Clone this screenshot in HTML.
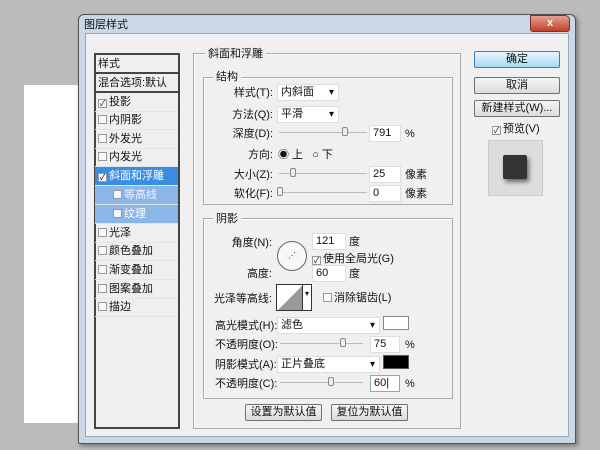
<!DOCTYPE html><html><head><meta charset="utf-8"><style>
*{margin:0;padding:0;box-sizing:border-box}
body{width:600px;height:450px;background:#bbb;position:relative;overflow:hidden;font-family:"Liberation Sans","Noto Sans CJK SC",sans-serif;font-size:11px;line-height:14px;color:#111}
.a{position:absolute}
.win{left:78px;top:14px;width:498px;height:430px;background:#c9d7e6;border:1px solid #555;border-radius:6px 6px 2px 2px;box-shadow:2px 2px 4px #777}
.inner{left:85px;top:33px;width:484px;height:404px;background:#f0f0f0;border:1px solid #9aa8b8}
.fs{border:1px solid #aaa;box-shadow:inset 1px 1px 0 #fff}
.lbl{background:#f0f0f0;padding:0 3px}
.row{left:95px;width:83px;height:19px;border-bottom:1px solid #e4e4e4;padding-left:3px;line-height:18px}
.cb{display:inline-block;width:9px;height:9px;border:1px solid #999;background:#f8f8f8;vertical-align:-1px;margin-right:2px;font-size:8px;line-height:7px;text-align:center}
.btn{border:1px solid #707070;border-radius:2px;background:linear-gradient(#f6f6f6,#dcdcdc);text-align:center;line-height:15px}
.inp{background:#fff;border:1px solid #ddd;padding-left:3px;line-height:15px}
.sel{background:#fff;border:1px solid #ddd;padding-left:3px;line-height:15px}
.sel:after{content:"▾";position:absolute;right:4px;font-size:10px}
.sl{height:1px;background:#bbb}
.th{width:6px;height:9px;border:1px solid #888;border-radius:2px;background:#eee}
.r{text-align:right}
</style></head><body>
<div class="a" style="left:24px;top:85px;width:57px;height:338px;background:#fff"></div>
<div class="a win"></div>
<div class="a" style="left:84px;top:18px;font-size:11px">图层样式</div>
<div class="a" style="left:530px;top:15px;width:40px;height:17px;background:linear-gradient(#e8a090,#c0402c);border:1px solid #733;border-radius:0 5px 3px 3px;color:#fff;text-align:center;font-weight:bold;line-height:15px">x</div>
<div class="a inner"></div>
<div class="a" style="left:94px;top:53px;width:86px;height:376px;border:2px solid #444;background:#efefef"></div>
<div class="a row" style="top:55px;border-bottom:2px solid #444">样式</div>
<div class="a row" style="top:74px;border-bottom:2px solid #444">混合选项:默认</div>
<div class="a row" style="top:93px"><span class="cb">✓</span>投影</div>
<div class="a row" style="top:111px"><span class="cb"></span>内阴影</div>
<div class="a row" style="top:130px"><span class="cb"></span>外发光</div>
<div class="a row" style="top:148px"><span class="cb"></span>内发光</div>
<div class="a row" style="top:167px;background:#3b8de0;color:#fff"><span class="cb" style="color:#000">✓</span>斜面和浮雕</div>
<div class="a row" style="top:186px;background:#8ab6e8;color:#eef;padding-left:18px"><span class="cb"></span>等高线</div>
<div class="a row" style="top:205px;background:#8ab6e8;color:#fff;padding-left:18px"><span class="cb"></span>纹理</div>
<div class="a row" style="top:224px"><span class="cb"></span>光泽</div>
<div class="a row" style="top:242px"><span class="cb"></span>颜色叠加</div>
<div class="a row" style="top:261px"><span class="cb"></span>渐变叠加</div>
<div class="a row" style="top:280px"><span class="cb"></span>图案叠加</div>
<div class="a row" style="top:298px"><span class="cb"></span>描边</div>
<div class="a fs" style="left:193px;top:53px;width:268px;height:376px"></div>
<div class="a lbl" style="left:205px;top:47px">斜面和浮雕</div>
<div class="a fs" style="left:203px;top:77px;width:250px;height:128px"></div>
<div class="a lbl" style="left:213px;top:70px">结构</div>
<div class="a r" style="left:220px;top:86px;width:53px">样式(T):</div>
<div class="a sel" style="left:277px;top:84px;width:62px">内斜面</div>
<div class="a r" style="left:220px;top:108px;width:53px">方法(Q):</div>
<div class="a sel" style="left:277px;top:106px;width:62px">平滑</div>
<div class="a r" style="left:220px;top:127px;width:53px">深度(D):</div>
<div class="a sl" style="left:279px;top:132px;width:88px"></div>
<div class="a th" style="left:342px;top:127px"></div>
<div class="a inp" style="left:369px;top:125px;width:32px">791</div><div class="a" style="left:405px;top:127px">%</div>
<div class="a r" style="left:220px;top:148px;width:53px">方向:</div>
<div class="a" style="left:278px;top:148px">◉ 上 &nbsp; ○ 下</div>
<div class="a r" style="left:220px;top:168px;width:53px">大小(Z):</div>
<div class="a sl" style="left:279px;top:173px;width:88px"></div><div class="a th" style="left:290px;top:168px"></div>
<div class="a inp" style="left:369px;top:166px;width:32px">25</div><div class="a" style="left:405px;top:168px">像素</div>
<div class="a r" style="left:220px;top:187px;width:53px">软化(F):</div>
<div class="a sl" style="left:279px;top:192px;width:88px"></div><div class="a th" style="left:277px;top:187px"></div>
<div class="a inp" style="left:369px;top:185px;width:32px">0</div><div class="a" style="left:405px;top:187px">像素</div>
<div class="a fs" style="left:203px;top:218px;width:250px;height:181px"></div>
<div class="a lbl" style="left:213px;top:212px">阴影</div>
<div class="a r" style="left:200px;top:236px;width:72px">角度(N):</div>
<div class="a" style="left:277px;top:241px;width:30px;height:30px;border:1px solid #666;border-radius:50%;background:#f8f8f8;font-size:8px;text-align:center;line-height:28px">⋰</div>
<div class="a inp" style="left:312px;top:233px;width:34px">121</div><div class="a" style="left:349px;top:235px">度</div>
<div class="a" style="left:312px;top:252px"><span class="cb">✓</span>使用全局光(G)</div>
<div class="a r" style="left:200px;top:267px;width:72px">高度:</div>
<div class="a inp" style="left:312px;top:265px;width:34px">60</div><div class="a" style="left:349px;top:267px">度</div>
<div class="a r" style="left:190px;top:292px;width:82px">光泽等高线:</div>
<div class="a" style="left:276px;top:284px;width:36px;height:27px;border:1px solid #333;background:#fff"><svg width="25" height="25" style="position:absolute;left:1px;top:0"><polygon points="0,25 25,0 25,25" fill="#999"/></svg><div class="a" style="left:25px;top:0;width:9px;height:25px;border-left:1px solid #333;font-size:8px;line-height:18px;text-align:center">▾</div></div>
<div class="a" style="left:323px;top:291px"><span class="cb"></span>消除锯齿(L)</div>
<div class="a" style="left:215px;top:319px">高光模式(H):</div>
<div class="a sel" style="left:277px;top:317px;width:103px">滤色</div>
<div class="a" style="left:383px;top:316px;width:26px;height:14px;border:1px solid #888;background:#fff"></div>
<div class="a" style="left:215px;top:338px">不透明度(O):</div>
<div class="a sl" style="left:280px;top:343px;width:83px"></div><div class="a th" style="left:340px;top:338px"></div>
<div class="a inp" style="left:370px;top:336px;width:30px">75</div><div class="a" style="left:405px;top:338px">%</div>
<div class="a" style="left:215px;top:358px">阴影模式(A):</div>
<div class="a sel" style="left:277px;top:356px;width:103px">正片叠底</div>
<div class="a" style="left:383px;top:355px;width:26px;height:14px;border:1px solid #555;background:#000"></div>
<div class="a" style="left:215px;top:377px">不透明度(C):</div>
<div class="a sl" style="left:280px;top:382px;width:83px"></div><div class="a th" style="left:328px;top:377px"></div>
<div class="a inp" style="left:370px;top:375px;width:30px;border-color:#8ab">60|</div><div class="a" style="left:405px;top:377px">%</div>
<div class="a btn" style="left:245px;top:404px;width:77px">设置为默认值</div>
<div class="a btn" style="left:331px;top:404px;width:77px">复位为默认值</div>
<div class="a btn" style="left:474px;top:51px;width:86px;border-color:#3c7fb1;background:linear-gradient(#eaf6fd,#a7d9f5)">确定</div>
<div class="a btn" style="left:474px;top:77px;width:86px">取消</div>
<div class="a btn" style="left:474px;top:100px;width:86px">新建样式(W)...</div>
<div class="a" style="left:492px;top:122px"><span class="cb">✓</span>预览(V)</div>
<div class="a" style="left:488px;top:140px;width:55px;height:56px;background:#ddd;border:1px solid #ccc"></div>
<div class="a" style="left:503px;top:155px;width:24px;height:24px;background:#333;border-radius:2px;box-shadow:2px 3px 5px #666"></div>
</body></html>
